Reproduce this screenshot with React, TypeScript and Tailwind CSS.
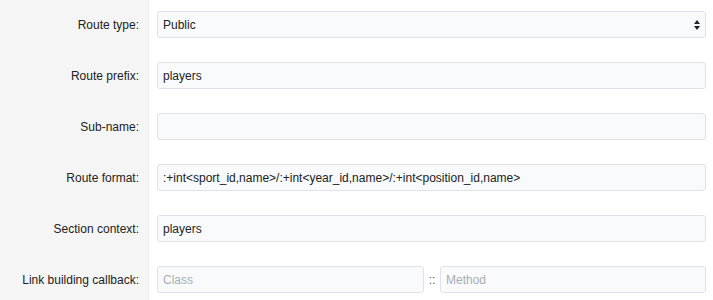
import React from "react";

const inputCls =
  "w-full h-[27px] rounded-[3px] border border-[#dfe3e7] bg-[#f8fafc] px-[5px] text-[12px] text-[#222] outline-none placeholder:text-[#a9aeb3]";

function Row({ label, children }: { label: string; children: React.ReactNode }) {
  return (
    <div className="flex">
      <div className="w-[149px] shrink-0 bg-[#f5f5f5] border-r border-[#ebebeb] flex items-center justify-end pr-[9px] pt-[11px] pb-[13px] text-[12px] text-[#222]">
        {label}
      </div>
      <div className="flex-1 pl-[8px] pr-[7px] pt-[11px] pb-[13px]">{children}</div>
    </div>
  );
}

export default function App() {
  return (
    <div
      className="w-[713px] h-[300px] overflow-hidden bg-white"
      style={{ fontFamily: '"Liberation Sans", Arial, sans-serif' }}
    >
      <Row label="Route type:">
        <div className="relative">
          <div className={inputCls + " flex items-center"}>Public</div>
          <svg
            className="absolute right-[6px] top-[9px]"
            width="6"
            height="10"
            viewBox="0 0 6 10"
          >
            <path d="M3 0 L6 4 L0 4 Z" fill="#222" />
            <path d="M3 10 L6 6 L0 6 Z" fill="#222" />
          </svg>
        </div>
      </Row>
      <Row label="Route prefix:">
        <input className={inputCls} defaultValue="players" />
      </Row>
      <Row label="Sub-name:">
        <input className={inputCls} defaultValue="" />
      </Row>
      <Row label="Route format:">
        <input
          className={inputCls}
          defaultValue=":+int<sport_id,name>/:+int<year_id,name>/:+int<position_id,name>"
        />
      </Row>
      <Row label="Section context:">
        <input className={inputCls} defaultValue="players" />
      </Row>
      <Row label="Link building callback:">
        <div className="flex items-center">
          <input className={inputCls + " !w-[267px] shrink-0"} placeholder="Class" />
          <span className="w-[16px] text-center text-[12px] text-[#555]">::</span>
          <input className={inputCls + " flex-1"} placeholder="Method" />
        </div>
      </Row>
    </div>
  );
}
